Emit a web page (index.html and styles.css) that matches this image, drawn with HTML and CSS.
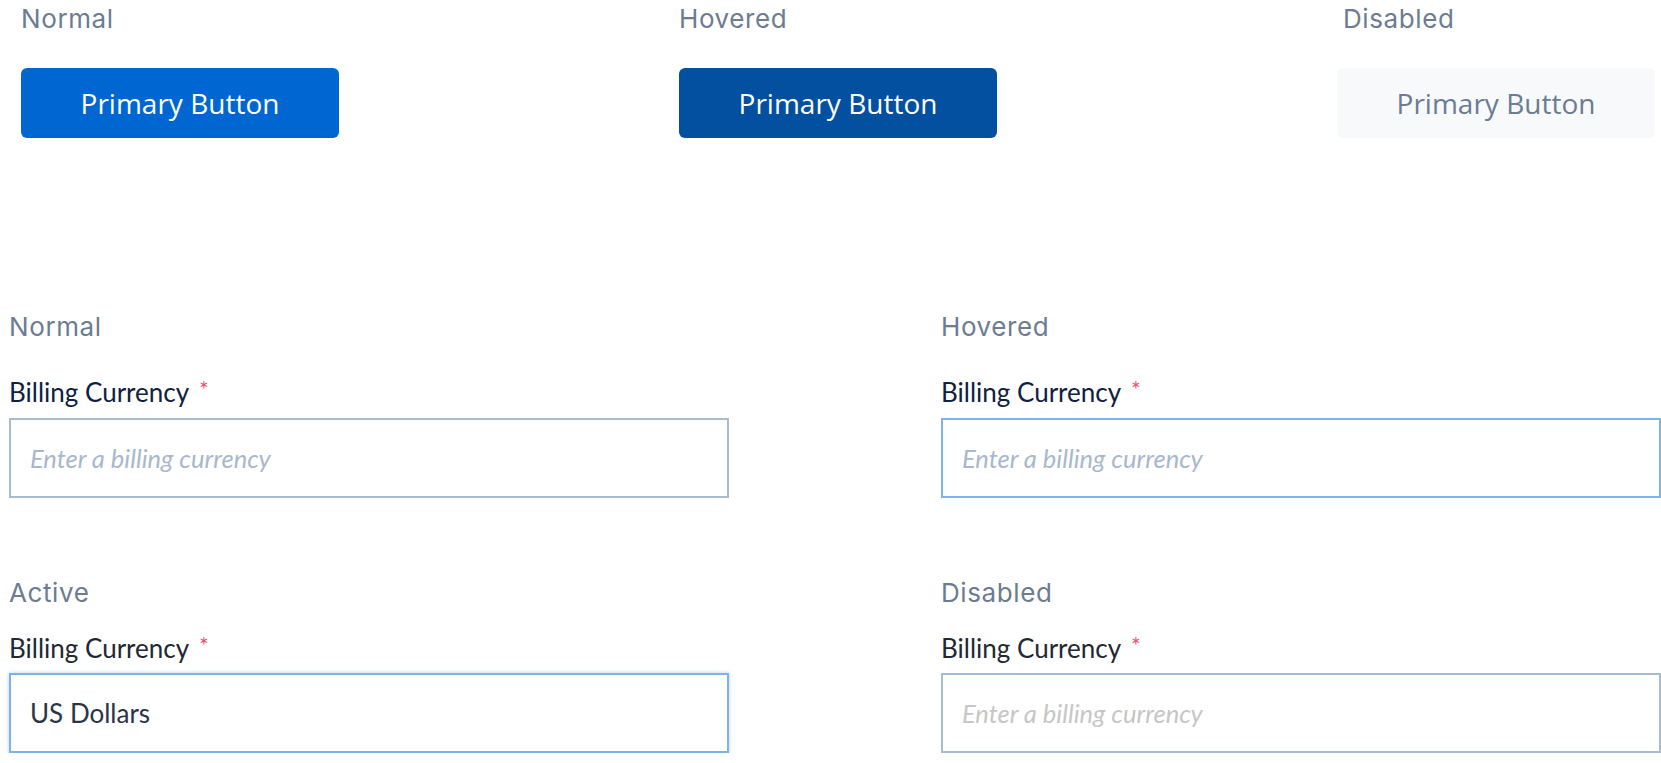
FILE: index.html
```html
<!DOCTYPE html>
<html lang="en">
<head>
<meta charset="utf-8">
<title>Component states</title>
<link rel="stylesheet" href="styles.css">
</head>
<body>
<main class="page">
  <section class="button-states">
    <div class="state">
      <div class="state-title">Normal</div>
      <button class="btn" type="button">Primary Button</button>
    </div>
    <div class="state">
      <div class="state-title">Hovered</div>
      <button class="btn btn-hover" type="button">Primary Button</button>
    </div>
    <div class="state state-disabled">
      <div class="state-title">Disabled</div>
      <button class="btn" type="button" disabled>Primary Button</button>
    </div>
  </section>

  <section class="field-states">
    <div class="field">
      <div class="state-title">Normal</div>
      <label class="field-label">Billing Currency<span class="req">*</span></label>
      <input class="input" type="text" placeholder="Enter a billing currency">
    </div>
    <div class="field">
      <div class="state-title">Hovered</div>
      <label class="field-label">Billing Currency<span class="req">*</span></label>
      <input class="input input-hover" type="text" placeholder="Enter a billing currency">
    </div>
    <div class="field field-b">
      <div class="state-title">Active</div>
      <label class="field-label">Billing Currency<span class="req">*</span></label>
      <input class="input input-active" type="text" value="US Dollars">
    </div>
    <div class="field field-b">
      <div class="state-title">Disabled</div>
      <label class="field-label">Billing Currency<span class="req">*</span></label>
      <input class="input" type="text" placeholder="Enter a billing currency" disabled>
    </div>
  </section>
</main>
</body>
</html>
```

FILE: styles.css
```css
body {
  margin: 0;
  background: #ffffff;
}

.page {
  padding-top: 3px;
}

.state-title {
  font-family: Inter, "Noto Sans", sans-serif;
  font-size: 26px;
  line-height: 32px;
  font-weight: 400;
  letter-spacing: 0.6px;
  color: #6b7c93;
}

/* Buttons */
.button-states {
  display: grid;
  grid-template-columns: repeat(3, 318px);
  column-gap: 340px;
  padding-left: 21px;
}

.button-states .state-title {
  margin-bottom: 33px;
}

.state-disabled .state-title {
  padding-left: 6px;
}

.btn {
  display: block;
  width: 318px;
  height: 70px;
  padding: 0;
  border: 0;
  border-radius: 6px;
  background: #0067d2;
  color: #ffffff;
  font-family: "Open Sans", "Noto Sans", sans-serif;
  font-size: 28px;
  font-weight: 400;
  cursor: pointer;
}

.btn-hover {
  background: #034fa0;
}

.btn:disabled {
  background: #f7f9fb;
  color: #6b7c93;
  cursor: default;
}

/* Fields */
.field-states {
  display: grid;
  grid-template-columns: 720px 720px;
  column-gap: 212px;
  row-gap: 79px;
  padding-left: 9px;
  margin-top: 173px;
}

.field-label {
  display: block;
  margin-top: 30px;
  font-family: Lato, "Open Sans", sans-serif;
  font-size: 26px;
  line-height: 32px;
  color: #0f213f;
}

.field-b .field-label {
  margin-top: 20px;
  color: #222831;
}

.req {
  margin-left: 10px;
  font-size: 23px;
  color: #f0506e;
  vertical-align: 4px;
}

.input {
  display: block;
  box-sizing: border-box;
  width: 100%;
  height: 80px;
  margin: 10px 0 0;
  padding: 0 19px;
  border: 2px solid #a9bbcf;
  border-radius: 0;
  background: #ffffff;
  font-family: Lato, "Open Sans", sans-serif;
  font-size: 26px;
  color: #2a3547;
  outline: none;
}

.field-b .input {
  margin-top: 9px;
}

.input::placeholder {
  color: #a8b8cc;
  font-style: italic;
  font-size: 25.5px;
  opacity: 1;
}

.input-hover {
  border-color: #7fb3e8;
}

.input-active {
  border-color: #7fb3e8;
  box-shadow: 0 0 4px rgba(127, 179, 232, 0.6);
}

.input:disabled {
  background: #ffffff;
  border-color: #a9bbcf;
}

.input:disabled::placeholder {
  color: #c6c6c6;
}
```
